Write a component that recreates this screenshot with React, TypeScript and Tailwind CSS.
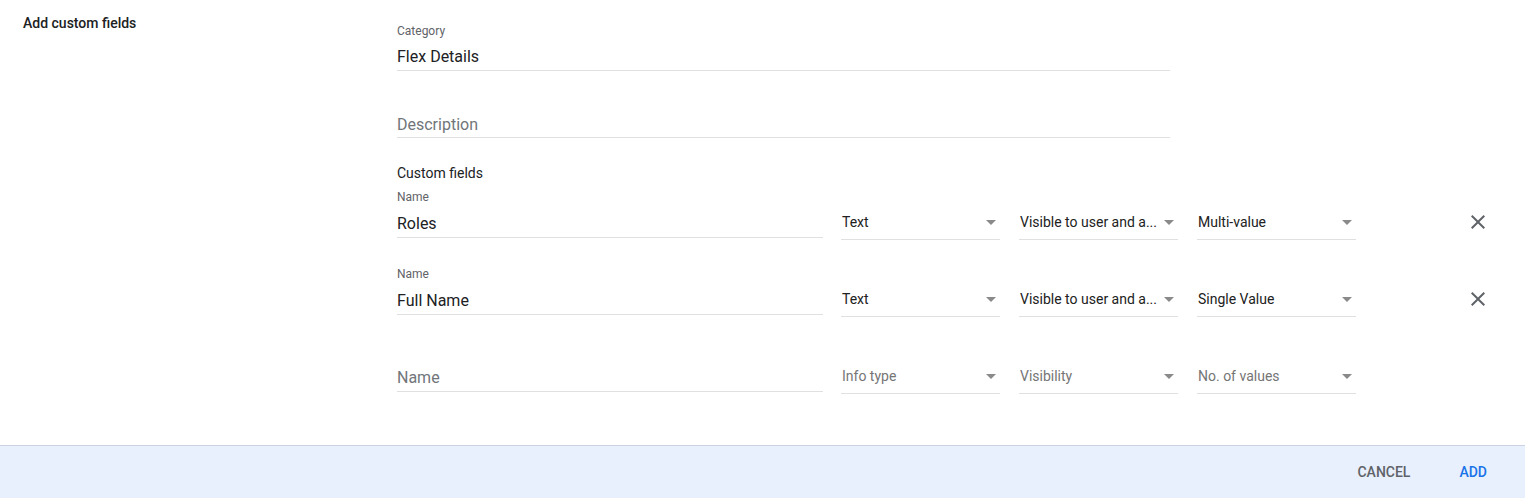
import React from 'react';

const Caret = () => (
  <svg width="10" height="5" viewBox="0 0 10 5" className="shrink-0">
    <path d="M0 0h10L5 5z" fill="#8a8a8a" />
  </svg>
);

const CloseIcon = () => (
  <svg width="24" height="24" viewBox="0 0 24 24">
    <path
      d="M19 6.41L17.59 5 12 10.59 6.41 5 5 6.41 10.59 12 5 17.59 6.41 19 12 13.41 17.59 19 19 17.59 13.41 12z"
      fill="#5f6368"
    />
  </svg>
);

type SelectProps = { value?: string; placeholder: string };

const Select = ({ value, placeholder }: SelectProps) => (
  <div className="w-[159px] flex items-start justify-between h-[28px] pl-[1px] pr-[4px] border-b border-[#e0e0e0]">
    <span
      className={`text-[14px] leading-[20px] whitespace-nowrap ${value ? 'text-[#212121]' : 'text-[#757575]'}`}
    >
      {value || placeholder}
    </span>
    <span className="pt-[8px] pl-1">
      <Caret />
    </span>
  </div>
);

type RowProps = {
  name?: string;
  info?: string;
  visibility?: string;
  values?: string;
  removable?: boolean;
  className?: string;
};

const FieldRow = ({ name, info, visibility, values, removable, className = '' }: RowProps) => (
  <div className={`flex items-start ${className}`}>
    <div className="w-[426px]">
      <div className="h-4 text-[12px] leading-4 text-[#5f6368]">{name ? 'Name' : ''}</div>
      <div
        className={`mt-[7px] h-[24px] text-[16px] leading-6 pb-[1px] box-content border-b border-[#e0e0e0] ${
          name ? 'text-[#202124]' : 'text-[#70757a]'
        }`}
      >
        {name || 'Name'}
      </div>
    </div>
    <div className="flex gap-[19px] ml-[18px] pt-[23px]">
      <Select value={info} placeholder="Info type" />
      <Select value={visibility} placeholder="Visibility" />
      <Select value={values} placeholder="No. of values" />
    </div>
    {removable && (
      <button className="ml-[110px] mt-[21px] w-6 h-6 flex items-center justify-center">
        <CloseIcon />
      </button>
    )}
  </div>
);

export default function App() {
  return (
    <div className="w-[1525px] h-[498px] bg-white flex flex-col font-['Roboto',sans-serif]">
      <div className="flex flex-1 pl-[23px]">
        <div className="w-[374px] pt-[13px]">
          <h2 className="text-[14px] leading-5 font-medium text-[#202124]">Add custom fields</h2>
        </div>

        <div className="flex-1 pt-[23px]">
          {/* Category */}
          <div className="w-[773px]">
            <div className="h-4 text-[12px] leading-4 text-[#5f6368]">Category</div>
            <div className="mt-[6px] h-[24px] text-[16px] leading-6 text-[#202124] pb-[1px] box-content border-b border-[#e0e0e0]">
              Flex Details
            </div>
          </div>

          {/* Description */}
          <div className="w-[773px] mt-[42px]">
            <div className="h-[24px] text-[16px] leading-6 text-[#70757a] box-content border-b border-[#e0e0e0]">
              Description
            </div>
          </div>

          <div className="mt-[25px] text-[14px] leading-5 text-[#202124]">Custom fields</div>

          <div className="mt-[6px] flex flex-col">
            <FieldRow
              name="Roles"
              info="Text"
              visibility="Visible to user and a..."
              values="Multi-value"
              removable
            />
            <FieldRow
              className="mt-[26px]"
              name="Full Name"
              info="Text"
              visibility="Visible to user and a..."
              values="Single Value"
              removable
            />
            <FieldRow className="mt-[26px]" />
          </div>
        </div>
      </div>

      <div className="h-[53px] shrink-0 bg-[#e8f0fe] border-t border-[#c9d3e3] flex items-center justify-end pr-[22px] gap-[17px]">
        <button className="px-4 h-9 text-[14px] font-medium text-[#5f6368] uppercase">
          Cancel
        </button>
        <button className="px-4 h-9 text-[14px] font-medium text-[#1a73e8] uppercase">
          Add
        </button>
      </div>
    </div>
  );
}
